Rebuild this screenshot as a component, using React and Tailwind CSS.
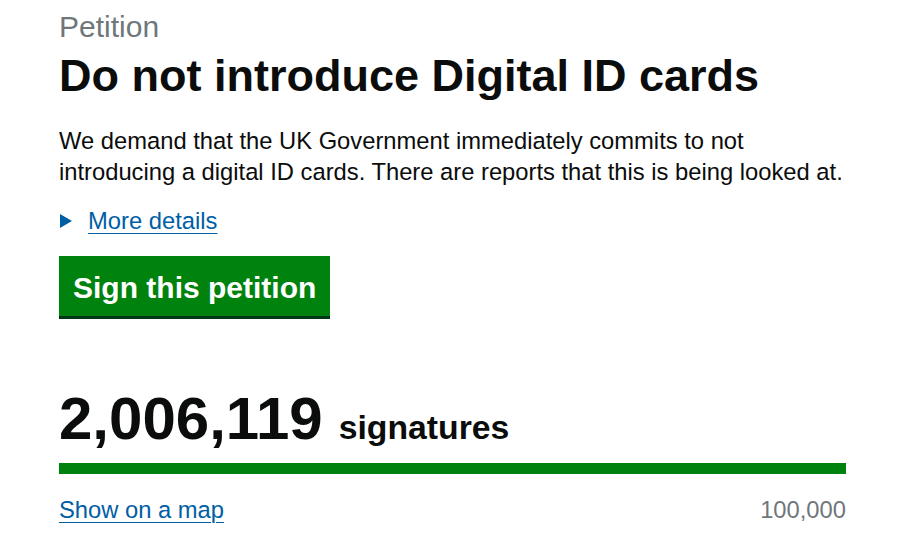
import React from 'react';

const App = () => {
  return (
    <div className="min-h-screen bg-white font-['Liberation_Sans',Arial,sans-serif] text-[#0b0c0c]">
      <div className="pl-[59px] pr-[75px] pt-[8px]">
        <span className="block text-[30px] leading-[37.5px] text-[#6f777b]">Petition</span>
        <h1 className="mt-[5px] text-[45px] leading-[50px] font-bold">Do not introduce Digital ID cards</h1>

        <p className="mt-[24px] text-[23.75px] leading-[31.25px]">
          We demand that the UK Government immediately commits to not
          <br />
          introducing a digital ID cards. There are reports that this is being looked at.
        </p>

        <div className="mt-[18px] flex items-center text-[23.75px] leading-[31.25px]">
          <span className="inline-block w-0 h-0 border-y-[7px] border-y-transparent border-l-[12px] border-l-[#005ea5] ml-[1px] mr-[16px]" />
          <a href="#" className="text-[#005ea5] underline underline-offset-[4px] decoration-1">More details</a>
        </div>

        <button className="mt-[20px] bg-[#00820e] text-white font-bold text-[30px] leading-[36px] px-[14px] pt-[14px] pb-[10px] shadow-[0_3px_0_#003618]">
          Sign this petition
        </button>

        <div className="mt-[73px] flex items-baseline">
          <span className="text-[60px] leading-[60px] font-bold">2,006,119</span>
          <span className="ml-[16px] text-[33.75px] font-bold">signatures</span>
        </div>

        <div className="mt-[10px] h-[11px] bg-[#00820e]" />

        <div className="mt-[20px] flex justify-between items-baseline text-[23.75px] leading-[31.25px]">
          <a href="#" className="text-[#005ea5] underline underline-offset-[4px] decoration-1">Show on a map</a>
          <span className="text-[#6f777b]">100,000</span>
        </div>
      </div>
    </div>
  );
};

export default App;
